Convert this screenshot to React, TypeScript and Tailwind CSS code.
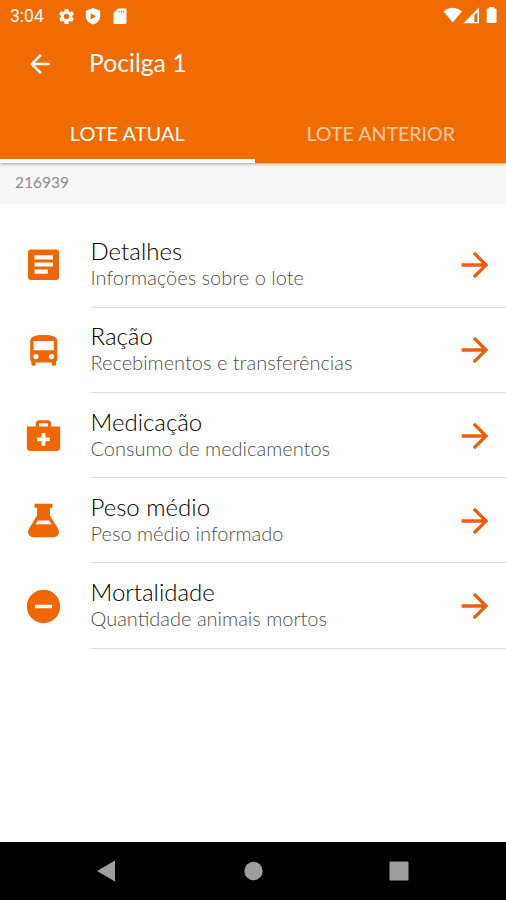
import type { ComponentType } from 'react'
import { IoMdFlask, IoMdMedkit, IoMdRemoveCircle } from 'react-icons/io'
import { MdArrowBack, MdArrowForward, MdSettings } from 'react-icons/md'

interface IconProps {
  className?: string
}

interface MenuItem {
  title: string
  subtitle: string
  icon: ComponentType<IconProps>
}

function DetailsIcon({ className }: IconProps) {
  return (
    <svg className={className} viewBox="0 0 41 41" fill="currentColor" aria-hidden="true">
      <path
        fillRule="evenodd"
        d="M8 5.500h25q3 0 3 3v24.500q0 3-3 3H8q-3 0-3-3V8.500q0-3 3-3zM11.500 11.200v4.200h18.500v-4.200zM11.500 18.400v4.200h18.500v-4.200zM11.500 25.600v4.200h13.300v-4.200z"
      />
    </svg>
  )
}

function BusIcon({ className }: IconProps) {
  return (
    <svg className={className} viewBox="0 0 41 41" fill="currentColor" aria-hidden="true">
      <path
        fillRule="evenodd"
        d="M7.200 11.500C7.200 6.500 12 5 20.700 5s13.600 1.500 13.600 6.500v17.200q0 1.800-1.300 3v2.500q0 1.500-1.500 1.500h-1.200q-1.500 0-1.500-1.500v-1.700H12.600v1.700q0 1.500-1.500 1.500H9.900q-1.500 0-1.500-1.500v-2.500q-1.200-1.200-1.200-3zM10.600 11v9.300h20.200V11zM12.900 24a2.600 2.600 0 1 0 0 5.200 2.600 2.600 0 0 0 0-5.200zM28.500 24a2.600 2.600 0 1 0 0 5.200 2.600 2.600 0 0 0 0-5.200z"
      />
    </svg>
  )
}

const items: MenuItem[] = [
  { title: 'Detalhes', subtitle: 'Informações sobre o lote', icon: DetailsIcon },
  { title: 'Ração', subtitle: 'Recebimentos e transferências', icon: BusIcon },
  { title: 'Medicação', subtitle: 'Consumo de medicamentos', icon: IoMdMedkit },
  { title: 'Peso médio', subtitle: 'Peso médio informado', icon: IoMdFlask },
  { title: 'Mortalidade', subtitle: 'Quantidade animais mortos', icon: IoMdRemoveCircle },
]

function StatusBar() {
  return (
    <div className="flex h-8 items-center pl-[10px] pr-[8px] text-white">
      <span className="w-[47px] pt-px font-['Roboto',sans-serif] text-[17.5px] leading-none">3:04</span>
      <MdSettings className="h-[19px] w-[19px]" />
      <svg className="ml-[9px] h-[17px] w-[16px]" viewBox="0 0 16 17" fill="currentColor" aria-hidden="true">
        <path
          fillRule="evenodd"
          d="M8 0 .8 2.700v5.500c0 4 3.100 7.200 7.200 8.300 4.100-1.100 7.200-4.300 7.200-8.300V2.700zM5.600 5.200v6.200l5.400-3.100z"
        />
      </svg>
      <svg className="ml-[12px] h-[17px] w-[14px]" viewBox="0 0 14 17" fill="currentColor" aria-hidden="true">
        <path
          fillRule="evenodd"
          d="M5 .5h7.200q1.300 0 1.300 1.300v12.900q0 1.300-1.300 1.300H1.800Q.5 16 .5 14.700V5zM5.400 2.800v1.800h1.100V2.800zM7.800 2.800v1.800h1.100V2.800zM10.200 2.800v1.800h1.100V2.800z"
        />
      </svg>
      <svg className="ml-auto h-[18px] w-[56px]" viewBox="0 0 56 18" fill="currentColor" aria-hidden="true">
        <path d="M1.500 4.500Q10.500-3 20 4.500L10.800 15.500z" />
        <path fillRule="evenodd" d="M37 .5v15.800H21.300zM35.500 5l-3.200 3.200v6.800h3.200z" />
        <path d="M47.100 0h5v1.500h1.400q1 0 1 1v12.500q0 1-1 1h-7.800q-1 0-1-1V2.500q0-1 1-1h1.400z" />
      </svg>
    </div>
  )
}

function MenuRow({ title, subtitle, icon: Icon }: MenuItem) {
  return (
    <li className="flex h-[85.3px] pl-[23px]">
      <div className="flex w-[67.500px] shrink-0 items-center">
        <Icon className="h-[41px] w-[41px] text-[#ee6700]" />
      </div>
      <div className="flex flex-1 items-center justify-between border-b-[1.500px] border-[#dedede] pr-[11.500px]">
        <div className="pb-[2px]">
          <h2 className="text-[24px] leading-[27px] font-light text-black">{title}</h2>
          <p className="pt-px text-[20px] leading-[25px] font-light text-[#505050]">{subtitle}</p>
        </div>
        <MdArrowForward className="mt-px h-10 w-10 text-[#ee5d0c]" />
      </div>
    </li>
  )
}

export default function App() {
  return (
    <div className="flex h-[900px] w-full flex-col overflow-hidden bg-white font-['Lato',sans-serif]">
      <header className="z-10 flex h-[162.500px] shrink-0 flex-col bg-[#f06c00] text-white shadow-[0_1px_3px_rgba(0,0,0,0.35)]">
        <StatusBar />
        <div className="flex h-[64px] items-center pl-[25px]">
          <MdArrowBack className="h-[30px] w-[30px]" />
          <h1 className="ml-[34px] pb-px text-[24.700px] leading-none">Pocilga 1</h1>
        </div>
        <nav className="grid flex-1 grid-cols-[254.500px_1fr] text-center">
          <button className="border-b-4 border-white pt-[12px] text-[20px]">LOTE ATUAL</button>
          <button className="border-b-4 border-transparent pt-[12px] pl-px text-[19.600px] text-[#fccda6]">LOTE ANTERIOR</button>
        </nav>
      </header>

      <div className="flex h-[41.500px] shrink-0 items-center bg-[#f7f7f7] pb-px pl-[15px] text-[15.500px] text-[#8c8c8c]">
        216939
      </div>

      <main className="flex-1 pt-[18.300px]">
        <ul>
          {items.map((item) => (
            <MenuRow key={item.title} {...item} />
          ))}
        </ul>
      </main>

      <footer className="h-[58px] shrink-0 bg-black text-[#9e9e9e]">
        <svg className="h-[58px] w-[506px]" viewBox="0 0 506 58" fill="currentColor" aria-hidden="true">
          <path d="M97 29l18-10.500v21z" />
          <circle cx="253.500" cy="29" r="9.200" />
          <rect x="389.500" y="19.500" width="19" height="19" rx="1" />
        </svg>
      </footer>
    </div>
  )
}
